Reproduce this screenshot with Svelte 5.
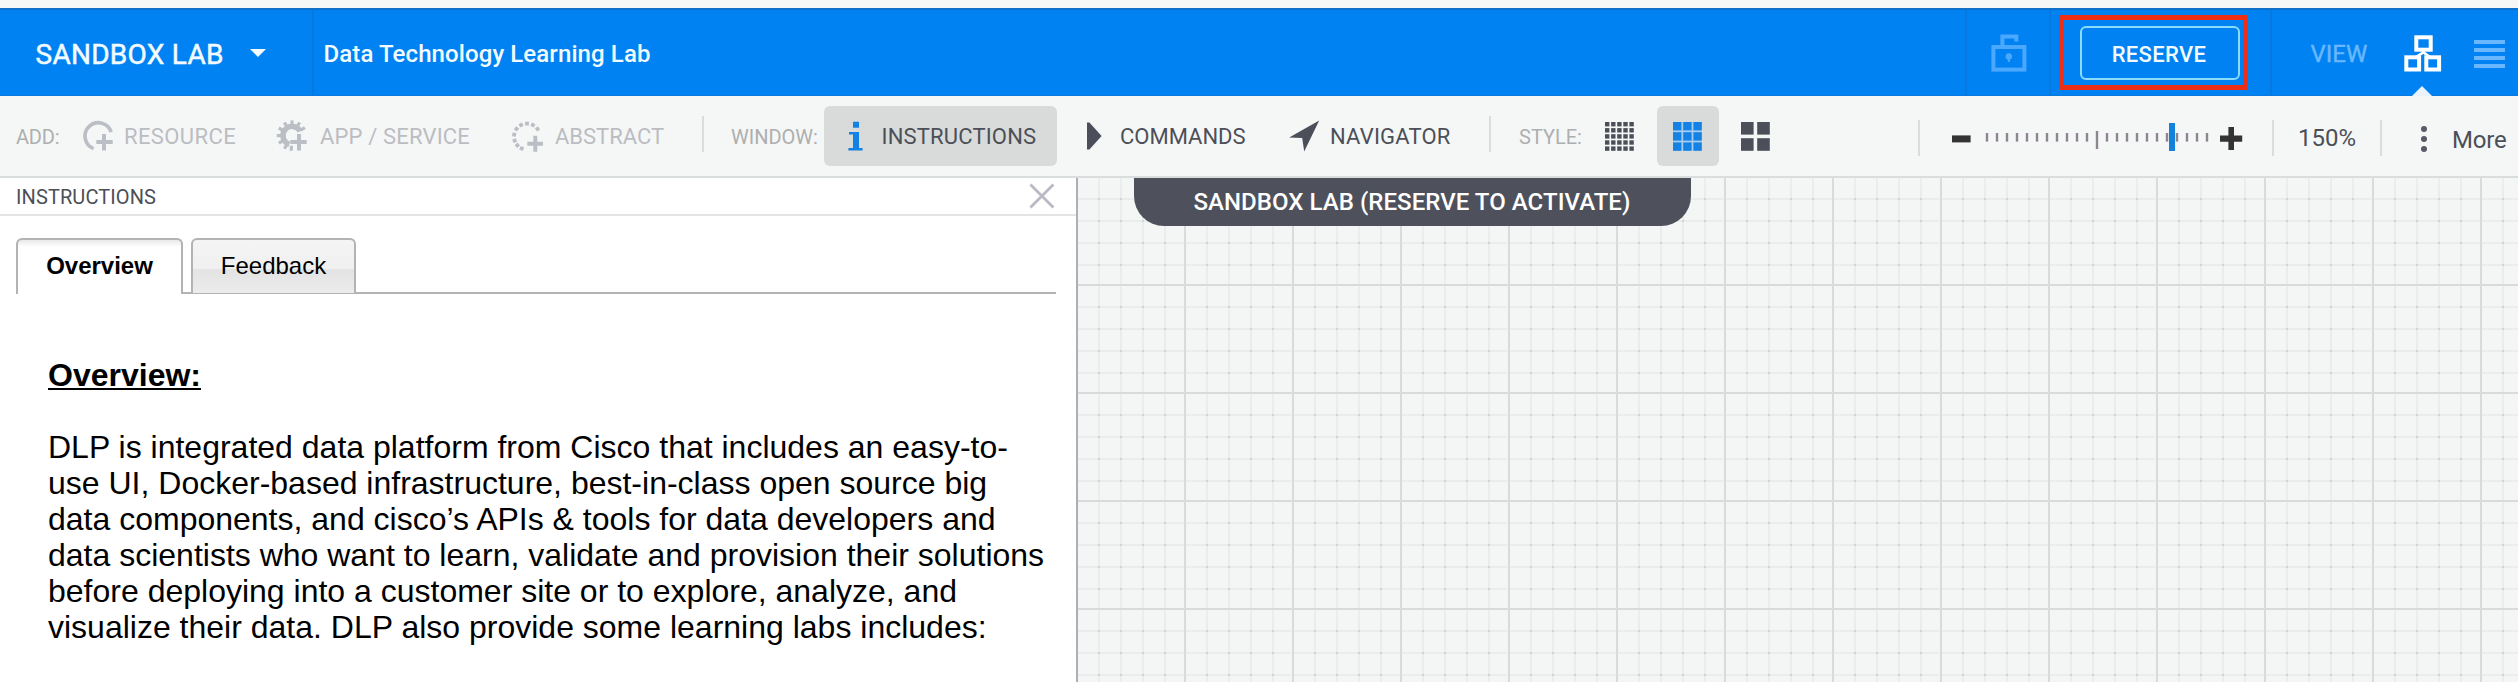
<script>
  const ticks = Array.from({ length: 23 }, (_, i) => ({ x: 35 + i * 10, major: i === 11 }));
  const thumbX = 217;

  const squares = (count, size, pitch) =>
    Array.from({ length: count * count }, (_, i) => ({
      x: (i % count) * pitch,
      y: Math.floor(i / count) * pitch,
      size,
    }));
  const styles = [
    { name: 'small', cells: squares(5, 4.4, 6.1) },
    { name: 'medium', cells: squares(3, 8.4, 10.2), active: true },
    { name: 'large', cells: squares(2, 12.6, 16.2) },
  ];

  const gear = [0, 30, 58, 183, 210, 240, 270, 300, 330];
  const dots = [-27, 0, 27, 54, -54, -81, -108, -132, -156].map((a) => {
    const r = ((a - 90) * Math.PI) / 180;
    return { x: 16 + 13 * Math.cos(r), y: 16.6 + 13 * Math.sin(r), a };
  });
</script>

<div class="app">
  <header>
    <button class="lab">
      <span>SANDBOX LAB</span>
      <svg class="caret" viewBox="0 0 16 8"><path d="M0 0h16L8 8z" fill="#f2fbff" /></svg>
    </button>
    <h1>Data Technology Learning Lab</h1>
    <div class="cell lock">
      <svg width="36" height="38" viewBox="0 0 36 38" fill="none" stroke="#4aa8ff" stroke-width="4">
        <rect x="2.4" y="13" width="31" height="22.6" />
        <path d="M11.4 13V2.4h14v5" />
        <circle cx="17.8" cy="22.4" r="3.2" fill="#4aa8ff" stroke="none" />
        <path d="M17.8 22v6" stroke-width="2" />
      </svg>
    </div>
    <div class="cell reserve">
      <div class="highlight"><button>RESERVE</button></div>
    </div>
    <div class="cell view">
      <span>VIEW</span>
      <svg class="topology" width="38" height="38" viewBox="0 0 38 38" fill="none" stroke="#fff" stroke-width="4">
        <rect x="12.3" y="2.3" width="14.4" height="12.4" />
        <rect x="2.3" y="22.3" width="12.8" height="12.2" />
        <rect x="22.3" y="22.3" width="12.8" height="12.2" />
        <path d="M19.4 15v3.4M12 22l7.4-4.6L26 22" stroke-width="2.6" />
      </svg>
      <svg class="list" width="31" height="28" viewBox="0 0 31 28" fill="#69b8ff">
        <path d="M0 0h31v4H0zM0 8h31v4H0zM0 16h31v4H0zM0 24h31v4H0z" />
      </svg>
      <svg class="pointer" width="20" height="10" viewBox="0 0 20 10"><path d="M0 10L10 0l10 10z" fill="#eaf3fb" /></svg>
    </div>
  </header>

  <nav>
    <span class="caption add">ADD:</span>
    <button class="tool off">
      <svg class="ico" viewBox="0 0 32 32" fill="none" stroke="#bcbec5">
        <path d="M29.2 12.1A13.4 13.4 0 1 0 11.6 28.6" stroke-width="3.6" />
        <path d="M14.3 22h16.4M22 14v16.6" stroke-width="4" />
      </svg>
      <span class="resource">RESOURCE</span>
    </button>
    <button class="tool off service">
      <svg class="ico" viewBox="0 0 32 32" fill="none" stroke="#bcbec5">
        <path d="M24.2 11.2A9.2 9.2 0 1 0 13.4 24.4" stroke-width="5.4" />
        {#each gear as a}
          <path d="M16 .4v5" stroke-width="3.2" transform="rotate({a} 16 15.6)" />
        {/each}
        <path d="M14.3 22h16.4M23 14v16.6" stroke-width="4" />
      </svg>
      <span class="app-service">APP / SERVICE</span>
    </button>
    <button class="tool off abstract">
      <svg class="ico" viewBox="0 0 32 32" fill="#bcbec5">
        {#each dots as d}
          <rect x={d.x - 1.9} y={d.y - 1.9} width="3.8" height="3.8" transform="rotate({d.a} {d.x} {d.y})" />
        {/each}
        <path d="M16.3 21.8h6v-6h4v6h6v4h-6v6h-4v-6h-6z" />
      </svg>
      <span class="abs">ABSTRACT</span>
    </button>
    <i class="rule"></i>
    <span class="caption window">WINDOW:</span>
    <button class="tool active">
      <svg class="info" width="16" height="30" viewBox="0 0 16 30" fill="#1481e4">
        <path d="M5 .8h6v6H5zM1 11h10v16h3.6v2.4H.4V27H5V13.4H1z" />
      </svg>
      <span class="ins">INSTRUCTIONS</span>
    </button>
    <button class="tool commands">
      <svg width="15" height="28" viewBox="0 0 15 28"><path d="M0 .4h2.4L14.6 14 2.4 27.6H0z" fill="#4c4f59" /></svg>
      <span>COMMANDS</span>
    </button>
    <button class="tool navigator">
      <svg width="31" height="32" viewBox="0 0 31 32"><path d="M30.2.6L15.2 31.4 13.2 18 .2 17.4z" fill="#4c4f59" /></svg>
      <span>NAVIGATOR</span>
    </button>
    <i class="rule"></i>
    <span class="caption style">STYLE:</span>
    <div class="styles">
      {#each styles as s}
        <button class="swatch" class:active={s.active} aria-label={s.name}>
          <svg width="29" height="29" viewBox="0 0 29 29" fill={s.active ? '#1481e4' : '#4c4f59'}>
            {#if s.active}<rect width="28.8" height="28.8" fill="#a6cdf0" />{/if}
            {#each s.cells as c}
              <rect x={c.x} y={c.y} width={c.size} height={c.size} />
            {/each}
          </svg>
        </button>
      {/each}
    </div>
    <i class="rule low r3"></i>
    <svg class="zoom" width="292" height="30" viewBox="0 0 292 30">
      <path d="M0 13.4h18.6v7H0z" fill="#333" />
      {#each ticks as t}
        <rect x={t.x - 1.2} y={t.major ? 9 : 11} width="2.4" height={t.major ? 18 : 8.6} fill="#8d8690" />
      {/each}
      <rect x={thumbX} y="1" width="6" height="28" fill="#1481dc" />
      <path d="M268 13.6h8.4V5h5.6v8.6h8.2v6.2H282V28h-5.6v-8.2H268z" fill="#333" />
    </svg>
    <i class="rule low r4"></i>
    <span class="percent">150%</span>
    <i class="rule low"></i>
    <svg class="kebab" width="6" height="28" viewBox="0 0 6 28" fill="#585b66">
      <circle cx="3" cy="4" r="3" /><circle cx="3" cy="14" r="3" /><circle cx="3" cy="24" r="3" />
    </svg>
    <span class="more">More</span>
  </nav>

  <main>
    <section class="panel">
      <div class="panel-head">
        <span>INSTRUCTIONS</span>
        <svg width="26" height="26" viewBox="0 0 26 26"><path d="M1.4 1.4l23 23.2M24.4 1.4L1.4 24.6" stroke="#b9bac3" stroke-width="2.8" /></svg>
      </div>
      <div class="tabs">
        <button class="tab current">Overview</button>
        <button class="tab">Feedback</button>
      </div>
      <article>
        <h2>Overview:</h2>
        <p>
          DLP is integrated data platform from Cisco that includes an easy-to-<br />
          use UI, Docker-based infrastructure, best-in-class open source big<br />
          data components, and cisco’s APIs &amp; tools for data developers and<br />
          data scientists who want to learn, validate and provision their solutions<br />
          before deploying into a customer site or to explore, analyze, and<br />
          visualize their data. DLP also provide some learning labs includes:
        </p>
      </article>
    </section>
    <section class="canvas">
      <svg class="grid" width="100%" height="100%">
        <defs>
          <pattern id="cells" x="-2" y="-2" width="108" height="108" patternUnits="userSpaceOnUse">
            {#each [22, 44, 66, 88] as o}
              <rect x={o} y="0" width="2" height="108" fill="#ebeded" />
              <rect x="0" y={o} width="108" height="2" fill="#ebeded" />
            {/each}
            {#each [22, 44, 66, 88] as ox}
              {#each [22, 44, 66, 88] as oy}
                <rect x={ox} y={oy} width="2" height="2" fill="#d3d5d5" />
              {/each}
            {/each}
            <rect width="2" height="108" fill="#d9dbdb" />
            <rect width="108" height="2" fill="#d9dbdb" />
          </pattern>
        </defs>
        <rect width="100%" height="100%" fill="url(#cells)" />
      </svg>
      <div class="badge">SANDBOX LAB (RESERVE TO ACTIVATE)</div>
    </section>
  </main>
</div>

<style>
  :global(body) { margin: 0; overflow: hidden; }
  * { box-sizing: border-box; }
  button { font: inherit; color: inherit; background: none; border: 0; padding: 0; margin: 0; }
  svg { display: block; flex: none; }
  .app {
    width: 2518px; height: 682px; padding-top: 8px; overflow: hidden;
    display: flex; flex-direction: column;
    background: #f5f7f7; font-family: Roboto, sans-serif; color: #4c4f57; white-space: nowrap;
  }

  header {
    height: 88px; flex: none; display: flex; align-items: stretch; color: #f2fbff;
    background: #0082f2; border-top: 2px solid #0e70c8; border-bottom: 1px solid #0b7ade;
  }
  .lab { width: 314px; padding: 1px 0 0 35.5px; display: flex; align-items: center; font-size: 28px; letter-spacing: .27px; border-right: 2px solid #0778de; -webkit-text-stroke: .5px; }
  .lab span { width: 214.5px; text-align: left; padding-top: 2px; }
  .caret { width: 16px; height: 8px; margin-bottom: 0; }
  h1 { flex: 1; margin: 0; padding: 2px 0 0 9.5px; align-self: center; font-size: 24px; font-weight: 500; letter-spacing: .1px; }
  .cell { border-left: 2px solid #0778de; display: flex; align-items: center; }
  .lock { width: 84px; padding-left: 24px; }
  .reserve { width: 221px; padding-left: 8px; }
  .highlight { width: 189px; height: 75px; border: 5px solid #ee2e15; padding: 6px 0 0 16px; }
  .highlight button { width: 160px; height: 54px; border: 2px solid #8bdcfb; border-radius: 6px; font-size: 22px; font-weight: 500; letter-spacing: .35px; padding: 2px 2px 0 0; display: block; }
  .view { width: 248px; padding-left: 38.5px; position: relative; font-size: 24px; }
  .view span { width: 93px; color: #69b8ff; padding-top: 2px; -webkit-text-stroke: .4px; }
  .topology { margin-right: 32px; margin-top: 2px; }
  .list { margin-top: 2px; }
  .pointer { position: absolute; left: 140px; bottom: -1px; }

  nav { height: 82px; flex: none; display: flex; align-items: center; border-bottom: 2px solid #dadddd; font-size: 22px; }
  .caption { font-size: 20px; color: #adafaf; padding-top: 2px; flex: none; }
  .add { width: 82px; padding-left: 16px; letter-spacing: -.2px; }
  .tool { display: flex; align-items: center; height: 60px; flex: none; text-align: left; }
  .tool span { padding-top: 1px; }
  .off { color: #bbbdc2; }
  .ico { width: 32px; height: 32px; }
  .resource { width: 151px; margin-left: 10px; letter-spacing: .4px; }
  .service { margin-left: 1px; }
  .app-service { width: 189px; margin-left: 12px; letter-spacing: .16px; }
  .abstract { margin-left: 2px; }
  .abs { width: 147px; margin-left: 12px; }
  .rule { width: 2px; height: 36px; background: #dbdddd; flex: none; margin-bottom: 4px; }
  .low { margin: 4px 0 0; }
  .window { width: 93px; margin-left: 27px; }
  .active { background: #d9dbda; border-radius: 6px; }
  .tool.active { width: 233px; padding-left: 23.5px; letter-spacing: .17px; }
  .ins { margin-left: 18px; }
  .commands { width: 202px; margin-left: 30px; }
  .commands span { margin-left: 18px; }
  .navigator { width: 200px; letter-spacing: .2px; }
  .navigator span { margin-left: 10px; }
  .style { margin-left: 28px; width: 68px; }
  .styles { display: flex; gap: 6px; width: 210px; flex: none; margin-left: 2px; }
  .swatch { width: 62px; height: 60px; padding-right: 2px; display: flex; align-items: center; justify-content: center; flex: none; }
  .r3 { margin-left: 119px; }
  .zoom { margin-left: 32px; margin-top: 1px; }
  .r4 { margin-left: 28px; }
  .percent { width: 106px; padding: 3px 0 0 24px; font-size: 24px; }
  .kebab { margin: 6px 25px 0 39px; }
  .more { font-size: 24px; padding: 7px 0 0; letter-spacing: -.18px; }

  main { flex: 1; display: flex; min-height: 0; }
  .panel { width: 1078px; background: #fff; border-right: 2px solid #abb0b6; flex: none; }
  .panel-head { height: 38px; border-bottom: 2px solid #e3e4e4; padding: 0 21px 0 16px; display: flex; align-items: center; justify-content: space-between; font-size: 20px; letter-spacing: .1px; }
  .panel-head span { padding-top: 2px; }
  .tabs { margin: 22px 20px 0 16px; height: 56px; display: flex; gap: 8px; border-bottom: 2px solid #b3b3b3; font-family: "Liberation Sans", Arial, sans-serif; color: #000; font-size: 24px; letter-spacing: -.22px; }
  .tab { width: 165px; height: 55px; border: 2px solid #b3b3b3; border-bottom: 0; border-radius: 6px 6px 0 0; background: linear-gradient(#f4f4f4 0, #f0f0f0 54%, #e3e3e3 56%, #ececec 100%); padding-bottom: 2px; }
  .current { width: 167px; height: 56px; font-weight: 700; background: linear-gradient(#e9e9e9, #fff 7px); padding-bottom: 3px; }
  article { padding: 63px 0 0 48px; font: 32px/36px "Liberation Sans", Arial, sans-serif; color: #000; }
  h2 { margin: 0 0 36px; font-size: 32px; line-height: 36px; text-decoration: underline; text-decoration-thickness: 2px; text-underline-offset: 2px; }
  p { margin: 0; }

  .canvas { flex: 1; position: relative; background: #f4f6f6; }
  .grid { position: absolute; inset: 0; }
  .badge { position: relative; width: 557px; height: 48px; margin-left: 56px; padding-left: 59.5px; line-height: 48px; background: #4e515c; color: #fff; border-radius: 0 0 30px 30px; font-size: 24px; font-weight: 500; letter-spacing: .05px; }
</style>
